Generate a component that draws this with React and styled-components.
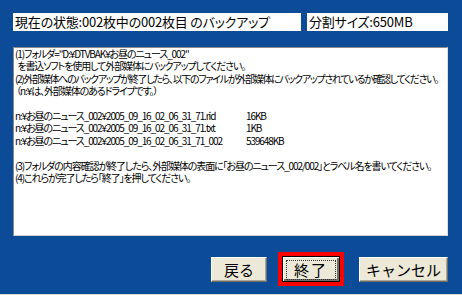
import React from 'react';
import styled, { createGlobalStyle } from 'styled-components';

const GlobalStyle = createGlobalStyle`
  html, body { margin: 0; padding: 0; }
  body {
    font-family: "Noto Sans CJK JP", "Liberation Sans", sans-serif;
    background: #0b4b97;
  }
`;

const Window = styled.div`
  width: 462px;
  height: 295px;
  box-sizing: border-box;
  background: #0b4b97;
  padding: 13px 14px 0 13px;
  border-bottom: 1px solid #d8d8d8;
  display: flex;
  flex-direction: column;
`;

const StatusRow = styled.div`
  display: flex;
  gap: 6px;
  height: 18px;
`;

const StatusBox = styled.div`
  width: ${p => p.w}px;
  height: 18px;
  background: #fff;
  box-sizing: border-box;
  padding-left: 2px;
  font-size: 13px;
  line-height: 18px;
  font-feature-settings: "palt";
  letter-spacing: -0.2px;
  white-space: nowrap;
  overflow: hidden;
  color: #000;
`;

const Memo = styled.div`
  margin-top: 16px;
  height: 189px;
  background: #fff;
  box-sizing: border-box;
  border-top: 1px solid #8a8a8a;
  border-left: 1px solid #8a8a8a;
  border-right: 1px solid #e0e0e0;
  border-bottom: 1px solid #d0d0d0;
  padding: 0 0 0 1px;
  font-size: 10px;
  line-height: 12.4px;
  font-feature-settings: "palt";
  letter-spacing: -1.1px;
  color: #000;
  overflow: hidden;
`;

const Line = styled.div`
  white-space: pre;
  height: 12.4px;
  display: flex;
  letter-spacing: ${p => (p.$tight ? '-1.3px' : 'inherit')};
`;

const FileName = styled.span`
  width: 231px;
  flex: none;
`;

const ButtonRow = styled.div`
  margin-top: 20px;
  display: flex;
  justify-content: flex-end;
  align-items: center;
`;

const Button = styled.button`
  width: ${p => p.w}px;
  height: 25px;
  margin-left: ${p => p.gap || 0}px;
  background: #ece9d8;
  font-family: "Noto Sans CJK JP", sans-serif;
  font-size: 15px;
  line-height: 1;
  color: #000;
  padding: 0;
  box-sizing: border-box;
  border: 1px solid;
  border-color: #fff #716f64 #716f64 #fff;
  box-shadow: inset -1px -1px 0 #aca899;
  cursor: pointer;
`;

const DefaultButton = styled(Button)`
  height: 26px;
  border: 1px solid #000;
  box-shadow: inset 1px 1px 0 #fff, inset -2px -2px 0 #716f64;
  outline: 4px solid #ff0000;
  outline-offset: 0;
`;

const Focus = styled.span`
  display: block;
  margin: 3px;
  height: 18px;
  border: 1px dotted #333;
  line-height: 18px;
  letter-spacing: 2px;
`;

const lines = [
  '(1)フォルダ="D:¥DTVBAK¥お昼のニュース_002"',
  '  を書込ソフトを使用して外部媒体にバックアップしてください。',
  '(2)外部媒体へのバックアップが終了したら、以下のファイルが外部媒体にバックアップされているか確認してください。',
  ' （n:¥は、外部媒体のあるドライブです。）',
  '',
];

const files = [
  ['n:¥お昼のニュース_002¥2005_09_16_02_06_31_71.rid', '16KB'],
  ['n:¥お昼のニュース_002¥2005_09_16_02_06_31_71.txt', '1KB'],
  ['n:¥お昼のニュース_002¥2005_09_16_02_06_31_71_002', '539648KB'],
];

const tail = [
  '',
  '(3)フォルダの内容確認が終了したら、外部媒体の表面に「お昼のニュース_002/002」とラベル名を書いてください。',
  '(4)これらが完了したら「終了」を押してください。',
];

export default function App() {
  return (
    <>
      <GlobalStyle />
      <Window>
        <StatusRow>
          <StatusBox w={288}>現在の状態:002枚中の002枚目 のバックアップ</StatusBox>
          <StatusBox w={141}>分割サイズ:650MB</StatusBox>
        </StatusRow>
        <Memo>
          {lines.map((t, i) => <Line key={'a' + i} $tight={i === 2}>{t}</Line>)}
          {files.map(([n, s]) => (
            <Line key={n}><FileName>{n}</FileName><span>{s}</span></Line>
          ))}
          {tail.map((t, i) => <Line key={'b' + i}>{t}</Line>)}
        </Memo>
        <ButtonRow>
          <Button w={56}>戻る</Button>
          <DefaultButton w={58} gap={15}><Focus>終了</Focus></DefaultButton>
          <Button w={89} gap={19}>キャンセル</Button>
        </ButtonRow>
      </Window>
    </>
  );
}
